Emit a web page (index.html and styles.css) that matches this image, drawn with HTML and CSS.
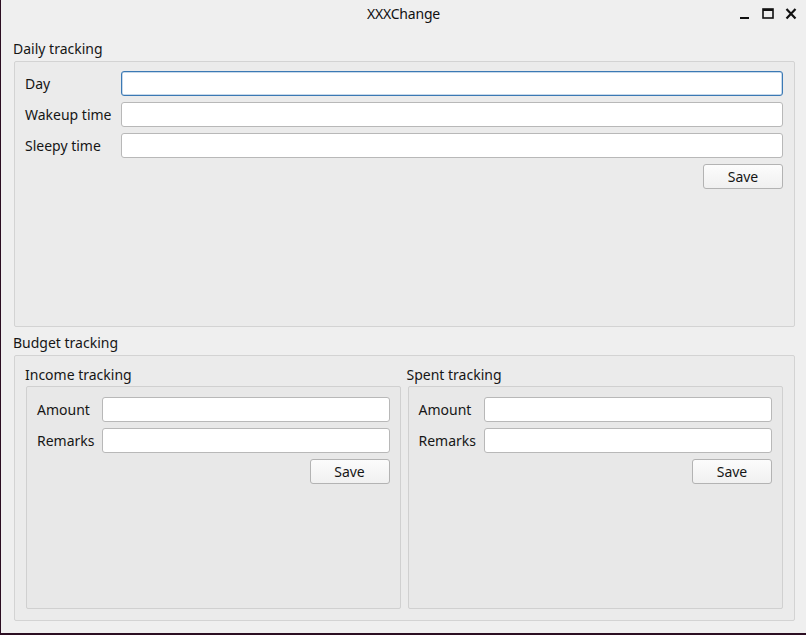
FILE: index.html
```html
<!DOCTYPE html>
<html>
<head>
<meta charset="utf-8">
<link rel="stylesheet" href="styles.css">
</head>
<body>
<div class="window">
  <div class="titlebar">
    <span class="title">XXXChange</span>
    <div class="controls">
      <svg class="ctl" width="14" height="14" viewBox="0 0 14 14"><rect x="2" y="10" width="9" height="2" fill="#111"/></svg>
      <svg class="ctl" width="14" height="14" viewBox="0 0 14 14"><rect x="2" y="2" width="10" height="9" fill="none" stroke="#111" stroke-width="1.6"/><rect x="2" y="2" width="10" height="2" fill="#111"/></svg>
      <svg class="ctl" width="14" height="14" viewBox="0 0 14 14"><path d="M2.5 2 L11.5 11.5 M11.5 2 L2.5 11.5" stroke="#111" stroke-width="2.2" fill="none"/></svg>
    </div>
  </div>
  <div class="content">
    <section class="group">
      <div class="group-title">Daily tracking</div>
      <div class="frame outer">
        <div class="form wide">
          <label>Day</label><input class="field focus" type="text">
          <label>Wakeup time</label><input class="field" type="text">
          <label>Sleepy time</label><input class="field" type="text">
        </div>
        <div class="btnrow"><button class="btn">Save</button></div>
      </div>
    </section>
    <section class="group budget">
      <div class="group-title">Budget tracking</div>
      <div class="frame outer split">
        <section class="sub">
          <div class="sub-title">Income tracking</div>
          <div class="frame inner">
            <div class="form narrow">
              <label>Amount</label><input class="field" type="text">
              <label>Remarks</label><input class="field" type="text">
            </div>
            <div class="btnrow"><button class="btn">Save</button></div>
          </div>
        </section>
        <section class="sub">
          <div class="sub-title">Spent tracking</div>
          <div class="frame inner">
            <div class="form narrow">
              <label>Amount</label><input class="field" type="text">
              <label>Remarks</label><input class="field" type="text">
            </div>
            <div class="btnrow"><button class="btn">Save</button></div>
          </div>
        </section>
      </div>
    </section>
  </div>
</div>
</body>
</html>
```
FILE: styles.css
```css
* { box-sizing: border-box; }
html, body { margin: 0; padding: 0; }
body {
  width: 806px;
  height: 635px;
  overflow: hidden;
  font-family: "Noto Sans", "DejaVu Sans", sans-serif;
  font-size: 14px;
  color: #161616;
  background: #efefef;
}
.window {
  width: 806px;
  height: 635px;
  background: #efefef;
  border-left: 1px solid #2c0e22;
  border-bottom: 2px solid #2c0e22;
  display: flex;
  flex-direction: column;
}
.titlebar {
  height: 30px;
  flex: none;
  position: relative;
  display: flex;
  align-items: center;
  justify-content: center;
}
.title {
  font-size: 14px;
  letter-spacing: -0.2px;
  margin-top: -3px;
  color: #111;
}
.controls {
  position: absolute;
  right: 8px;
  top: 7px;
  display: flex;
  gap: 9px;
}
.ctl { display: block; }
.content {
  flex: 1;
  display: flex;
  flex-direction: column;
  padding: 6px 11px 12px 12px;
}
.group {
  flex: 1;
  display: flex;
  flex-direction: column;
}
.budget { margin-top: 3px; }
.group-title, .sub-title {
  height: 24px;
  padding-top: 2px;
  line-height: 22px;
  margin-bottom: 1px;
  white-space: nowrap;
}
.sub-title { margin-bottom: 0; padding-top: 1px; line-height: 23px; }
.frame {
  border: 1px solid #d3d3d3;
  border-radius: 2px;
  margin-left: 1px;
}
.outer {
  flex: 1;
  background: #ebebeb;
  padding: 9px 11px 10px 10px;
}
.split {
  display: grid;
  grid-template-columns: 376fr 377fr;
  column-gap: 6px;
  padding: 6px 11px 11px 10px;
}
.sub {
  display: flex;
  flex-direction: column;
  min-width: 0;
}
.inner {
  flex: 1;
  background: #e8e8e8;
  border-color: #d0d0d0;
  padding: 10px 10px 10px 10px;
}
.form {
  display: grid;
  row-gap: 6px;
  align-items: center;
}
.wide { grid-template-columns: 96px 1fr; }
.narrow { grid-template-columns: 65px 1fr; }
.form label { white-space: nowrap; }
.field {
  display: block;
  width: 100%;
  height: 25px;
  border: 1px solid #b8b8b8;
  border-radius: 3px;
  background: #ffffff;
  outline: none;
  margin: 0;
  padding: 0 4px;
  font: inherit;
}
.field.focus {
  border-color: #3b79b4;
  box-shadow: inset 0 0 0 0.5px #8fb3d6;
}
.btnrow {
  display: flex;
  justify-content: flex-end;
  margin-top: 6px;
}
.btn {
  width: 80px;
  height: 25px;
  border: 1px solid #b3b3b3;
  border-radius: 3px;
  background: linear-gradient(#fcfcfc, #f0f0f0);
  font: inherit;
  color: #161616;
  padding: 0;
  margin: 0;
}
```
